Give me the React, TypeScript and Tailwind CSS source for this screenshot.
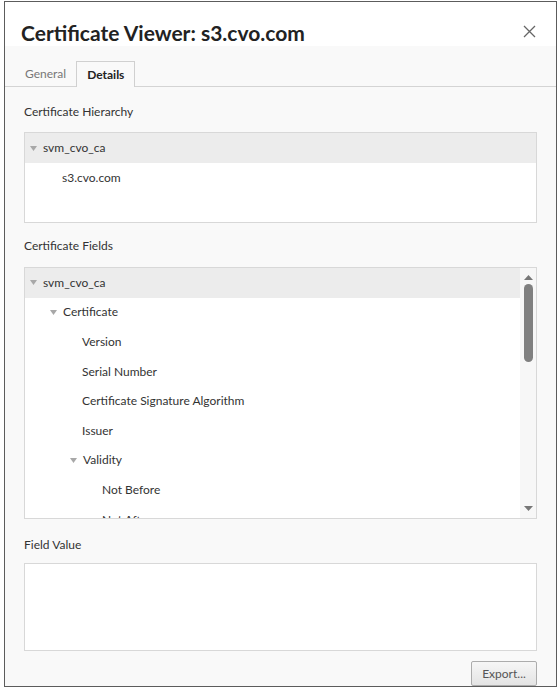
import React from "react";

const font = { fontFamily: "Lato, 'Noto Sans', sans-serif" };

function Caret({ className = "" }: { className?: string }) {
  return (
    <svg width="7" height="5" viewBox="0 0 7 5" className={className}>
      <path d="M0 0 H7 L3.5 5 Z" fill="#a8a8a8" />
    </svg>
  );
}

type Row = { label: string; depth: number; open?: boolean; selected?: boolean };

const fields: Row[] = [
  { label: "svm_cvo_ca", depth: 0, open: true, selected: true },
  { label: "Certificate", depth: 1, open: true },
  { label: "Version", depth: 2 },
  { label: "Serial Number", depth: 2 },
  { label: "Certificate Signature Algorithm", depth: 2 },
  { label: "Issuer", depth: 2 },
  { label: "Validity", depth: 2, open: true },
  { label: "Not Before", depth: 3 },
  { label: "Not After", depth: 3 },
];

const padByDepth = ["pl-[5px]", "pl-[25px]", "pl-[45px]", "pl-[65px]"];
const textPadByDepth = ["pl-[13px]", "pl-[37px]", "pl-[57px]", "pl-[77px]"];

function TreeRow({ row }: { row: Row }) {
  return (
    <div
      className={`h-[29.6px] shrink-0 flex items-center text-[12px] text-[#333] ${
        row.selected ? "bg-[#ececec]" : ""
      } ${row.open ? padByDepth[row.depth] : textPadByDepth[row.depth]}`}
    >
      {row.open && <Caret className="mr-[6px] shrink-0" />}
      <span className="whitespace-nowrap">{row.label}</span>
    </div>
  );
}

function SectionLabel({ children }: { children: React.ReactNode }) {
  return <div className="text-[12px] text-[#333] leading-[16px]">{children}</div>;
}

export default function App() {
  return (
    <div className="w-[560px] h-[689px] bg-white pt-[1px] pl-[4px]" style={font}>
      <div className="w-[553px] h-[686px] border border-[#5c5c5c] bg-[#f9f9f9] flex flex-col">
        {/* title bar */}
        <div className="h-[44px] bg-white flex items-end justify-between pl-[16px] pr-[20px]">
          <div className="text-[21px] font-bold text-[#222] leading-[24px] pb-[1px]">
            Certificate Viewer: s3.cvo.com
          </div>
          <svg width="13" height="13" viewBox="0 0 13 13" className="mb-[8px]">
            <path d="M1 1 L12 12 M12 1 L1 12" stroke="#666" strokeWidth="1.3" />
          </svg>
        </div>

        {/* tabs */}
        <div className="h-[41px] flex items-end border-b border-[#d4d4d4] pl-[10px]">
          <div className="h-[25px] px-[10px] flex items-center text-[12px] text-[#777]">General</div>
          <div className="h-[26px] -mb-px px-[10px] flex items-center text-[12px] font-bold text-[#222] border border-b-0 border-[#d0d0d0] bg-[#f9f9f9]">
            Details
          </div>
        </div>

        <div className="flex flex-col pl-[19px] pr-[19px]">
          <div className="pt-[17px]">
            <SectionLabel>Certificate Hierarchy</SectionLabel>
          </div>
          <div className="mt-[12px] h-[91px] bg-white border border-[#d8d8d8]">
            <div className="h-[30px] flex items-center pl-[5px] bg-[#ececec] text-[12px] text-[#333]">
              <Caret className="mr-[6px]" />
              <span>svm_cvo_ca</span>
            </div>
            <div className="h-[30px] flex items-center pl-[37px] text-[12px] text-[#333]">s3.cvo.com</div>
          </div>

          <div className="pt-[15px]">
            <SectionLabel>Certificate Fields</SectionLabel>
          </div>
          <div className="mt-[13px] h-[252px] bg-white border border-[#d8d8d8] flex overflow-hidden">
            <div className="flex-1 flex flex-col overflow-hidden">
              {fields.map((r) => (
                <TreeRow key={r.label} row={r} />
              ))}
            </div>
            <div className="w-[16px] bg-[#f7f7f7] flex flex-col items-center pt-[7px] pb-[7px]">
              <svg width="9" height="5" viewBox="0 0 9 5">
                <path d="M0 5 L4.5 0 L9 5 Z" fill="#777" />
              </svg>
              <div className="mt-[4px] w-[9px] h-[78px] rounded-full bg-[#808080]" />
              <div className="flex-1" />
              <svg width="9" height="5" viewBox="0 0 9 5">
                <path d="M0 0 H9 L4.5 5 Z" fill="#777" />
              </svg>
            </div>
          </div>

          <div className="pt-[18px]">
            <SectionLabel>Field Value</SectionLabel>
          </div>
          <div className="mt-[10px] h-[88px] bg-white border border-[#d8d8d8]" />

          <div className="flex justify-end mt-[10px]">
            <button className="w-[66px] h-[25px] border border-[#acacac] bg-gradient-to-b from-[#f6f6f6] to-[#e4e4e4] text-[12px] text-[#555] rounded-[2px]">
              Export...
            </button>
          </div>
        </div>
      </div>
    </div>
  );
}
